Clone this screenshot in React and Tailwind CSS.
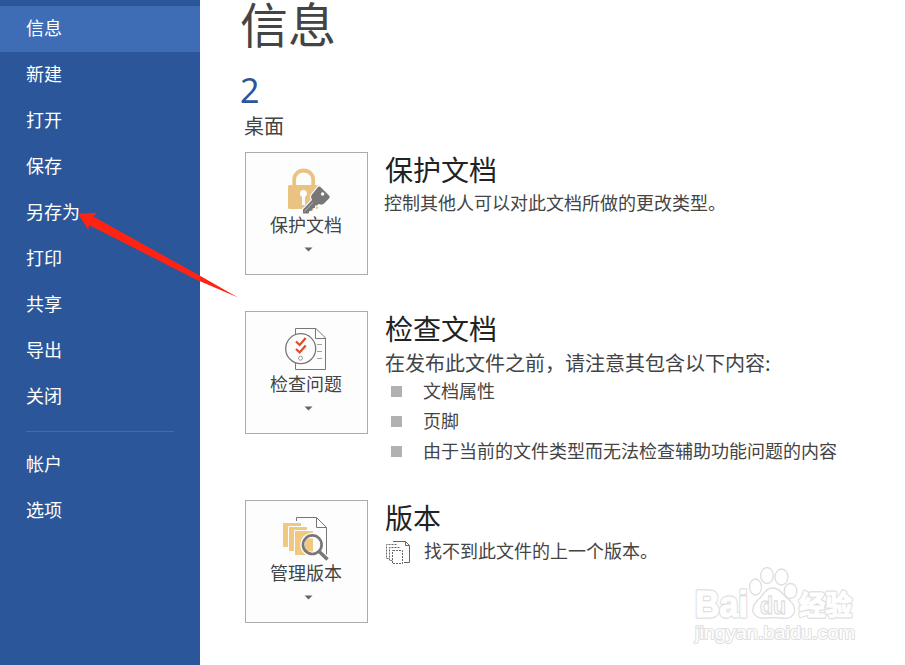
const primaryItems = ["信息", "新建", "打开", "保存", "另存为", "打印", "共享", "导出", "关闭"];
const secondaryItems = ["帐户", "选项"];
const issues = ["文档属性", "页脚", "由于当前的文件类型而无法检查辅助功能问题的内容"];

function NavItem({ label, active }) {
  return (
    <div
      className={`flex h-[46px] items-center pb-[4px] pl-[26px] text-[18px] leading-[26px] text-white ${
        active ? "bg-[#3e6db5]" : ""
      }`}
    >
      {label}
    </div>
  );
}

function Sidebar() {
  return (
    <nav className="h-full w-[200px] shrink-0 bg-[#2b579a] pt-[6px]">
      {primaryItems.map((label, i) => (
        <NavItem key={label} label={label} active={i === 0} />
      ))}
      <div className="mx-[26px] mt-[11px] mb-[10px] h-px bg-[#3e6db5]" />
      {secondaryItems.map((label) => (
        <NavItem key={label} label={label} />
      ))}
    </nav>
  );
}

function LockIcon() {
  return (
    <svg className="h-[62px] w-[121px]" viewBox="0 0 121 62" fill="none">
      <path d="M48.2 33V26.500a9.500 9 0 0 1 19 0V33" stroke="#eac282" strokeWidth="3.800" />
      <rect x="42" y="32" width="30" height="24" rx="1.500" fill="#eac282" />
      <circle cx="57.400" cy="40.600" r="3.500" fill="#fdfdfd" />
      <path d="M57.500 41v11" stroke="#fdfdfd" strokeWidth="3" />
      <path
        d="M72 34q1.500-1 3 .5l8 8q1.500 1.500 0 3l-5 5q-1.500 1.500-3.500 1l-2-.5-1.500 1.500h-2v2.500l-2.500.5v2l-3 .5-1 2.500h-5.500v-4l9-9.500-1-3q0-1.500 1-2.500z"
        fill="#777"
        stroke="#fdfdfd"
        strokeWidth="2.200"
        paintOrder="stroke"
      />
      <circle cx="76.600" cy="41" r="1.700" fill="#fdfdfd" />
      <path d="M58.500 58.500l8.500-9" stroke="#b5b5b5" strokeWidth="1" />
    </svg>
  );
}

function InspectIcon() {
  return (
    <svg className="h-[62px] w-[121px]" viewBox="0 0 121 62" fill="none">
      <path d="M49.500 16.500h20.500l9.500 9.500v31.500h-30z" stroke="#777" />
      <path d="M69.500 16.500v10h10" stroke="#777" />
      <path d="M71 32.500h5M71 39.500h5M71 46.500h5" stroke="#a0a0a0" />
      <circle cx="54.700" cy="36.700" r="15" fill="#fdfdfd" stroke="#777" strokeWidth="1.300" />
      <path
        d="M50 29.500l3.700 3.500 6-7M50 37l3.700 3.500 6-7"
        stroke="#dc4d28"
        strokeWidth="2.200"
      />
      <circle cx="54.500" cy="46.200" r="2" stroke="#999" />
    </svg>
  );
}

function VersionsIcon() {
  return (
    <svg className="h-[62px] w-[121px]" viewBox="0 0 121 62" fill="none">
      <path d="M50.500 20v-3.500h20l10 10V56" stroke="#777" />
      <path d="M70.500 16.500v10h10" stroke="#777" />
      <path d="M37 22h18v24H37z" fill="#f0c880" />
      <path d="M42.500 25.500h19v25h-19z" fill="#f0c880" stroke="#fdfdfd" />
      <path d="M48.500 29.500h19v25h-19z" fill="#f0c880" stroke="#fdfdfd" />
      <circle cx="66.300" cy="43.700" r="12" fill="#fdfdfd" />
      <path d="M59 37.500h8v13h-8z" fill="#f0c880" />
      <path d="M73 50.500l8.500 8" stroke="#fdfdfd" strokeWidth="6" />
      <circle cx="66.300" cy="43.700" r="9.300" stroke="#777" strokeWidth="2.700" />
      <path d="M73.200 50.500l8.300 8" stroke="#777" strokeWidth="3.500" />
    </svg>
  );
}

function NoVersionsIcon() {
  return (
    <svg className="h-[25px] w-[25px] shrink-0" viewBox="0 0 25 25" fill="none" stroke="#666">
      <path d="M7 1.500h12.500l4 4v17H18M19.500 1.500v4h4" />
      <path d="M10.500 4.500h-10v14h3M13.500 7.500h-10v13h3" strokeDasharray="2 1" />
      <path d="M7 10.500h9.500v13H6.500v-13z" fill="#fff" strokeDasharray="2 1" />
    </svg>
  );
}

function TileButton({ icon, label }) {
  return (
    <button className="flex h-[123px] w-[123px] shrink-0 flex-col items-center border border-[#ababab] bg-[#fdfdfd] text-[#444]">
      {icon}
      <span className="-mt-[4px] mr-px text-[18px] leading-[26px]">{label}</span>
      <svg className="mt-[10px] h-[5px] w-[9px] translate-x-[2px]" viewBox="0 0 9 5">
        <path d="M.5.5h8l-4 4z" fill="#666" />
      </svg>
    </button>
  );
}

function Section({ icon, label, title, className, children }) {
  return (
    <section className={`flex gap-[17px] ${className}`}>
      <TileButton icon={icon} label={label} />
      <div className="text-[18px] text-[#444]">
        <h2 className="-mt-px h-[36px] text-[28px] leading-[36px] text-[#222]">{title}</h2>
        {children}
      </div>
    </section>
  );
}

function Lettering() {
  return (
    <>
      <text x="10" y="57" fontSize="36" textLength="53" lengthAdjust="spacingAndGlyphs">Bai</text>
      <text x="114" y="55" fontSize="27" textLength="53" lengthAdjust="spacingAndGlyphs">经验</text>
    </>
  );
}

function Watermark() {
  return (
    <svg
      className="absolute top-[560px] left-[685px] h-[90px] w-[180px]"
      viewBox="0 0 180 90"
      fill="#fff"
      stroke="#dedede"
      strokeWidth="1.300"
      strokeLinejoin="round"
      fontFamily="'Liberation Sans', 'Noto Sans CJK SC', sans-serif"
      fontWeight="bold"
    >
      <g strokeWidth="3.400" aria-hidden="true">
        <Lettering />
      </g>
      <g stroke="#fff" strokeWidth="1.200">
        <Lettering />
      </g>
      <ellipse cx="70.500" cy="27" rx="6" ry="8" />
      <ellipse cx="82" cy="15.500" rx="6.300" ry="8" />
      <ellipse cx="96.500" cy="17" rx="6.500" ry="8" />
      <ellipse cx="105.500" cy="31" rx="6.300" ry="7.500" />
      <path d="M87 28c7 0 10 5 15 10 6 5 9 9 7 15-2 5-7 6-13 5-5-.5-10-.5-14 0-7 1-12-1-14-6-1-6 2-10 7-14 4-4 6-10 12-10z" />
      <text x="75" y="54" fontSize="24" textLength="26" lengthAdjust="spacingAndGlyphs">du</text>
      <text
        x="10"
        y="79"
        fontSize="19"
        fontWeight="normal"
        stroke="#e0e0e0"
        strokeWidth="2"
        textLength="160"
        lengthAdjust="spacingAndGlyphs"
        paintOrder="stroke"
      >
        jingyan.baidu.com
      </text>
    </svg>
  );
}

export default function App() {
  return (
    <div className="relative flex h-[665px] w-[905px] overflow-hidden bg-white font-['Noto_Sans_CJK_SC',sans-serif]">
      <Sidebar />
      <main className="flex-1 pl-[45px]">
        <h1 className="-ml-[5px] h-[69px] text-[48px] leading-[44px] text-[#444]">信息</h1>
        <div className="-ml-[5px] h-[43px] font-['Noto_Sans',sans-serif] text-[34px] leading-[42px] text-[#2b579a]">2</div>
        <div className="-ml-px h-[40px] text-[20px] leading-[28px] text-[#444]">桌面</div>

        <Section icon={<LockIcon />} label="保护文档" title="保护文档" className="h-[159px]">
          <p className="-ml-px leading-[30px]">控制其他人可以对此文档所做的更改类型。</p>
        </Section>

        <Section icon={<InspectIcon />} label="检查问题" title="检查文档" className="h-[189px]">
          <p className="h-[30px] text-[20px] leading-[34px]">在发布此文件之前，请注意其包含以下内容:</p>
          <ul>
            {issues.map((issue) => (
              <li key={issue} className="flex h-[30px] items-center pl-[6px]">
                <span className="mr-[21px] h-[11px] w-[11px] bg-[#b1b1b1]" />
                <span className="-mt-[2px]">{issue}</span>
              </li>
            ))}
          </ul>
        </Section>

        <Section icon={<VersionsIcon />} label="管理版本" title="版本" className="h-[123px]">
          <div className="mt-[2px] flex h-[30px] items-center gap-[13px] pl-px">
            <NoVersionsIcon />
            <p className="-mt-[3px]">找不到此文件的上一个版本。</p>
          </div>
        </Section>
      </main>

      <svg className="absolute top-[205px] left-[70px] h-[100px] w-[180px]" viewBox="70 205 180 100">
        <path d="M78 213.700L97 212.700 93.300 216.500 200 275.800 238 297.500 196 279.500 89 225 88.300 230z" fill="#ff2313" />
      </svg>
      <Watermark />
    </div>
  );
}
